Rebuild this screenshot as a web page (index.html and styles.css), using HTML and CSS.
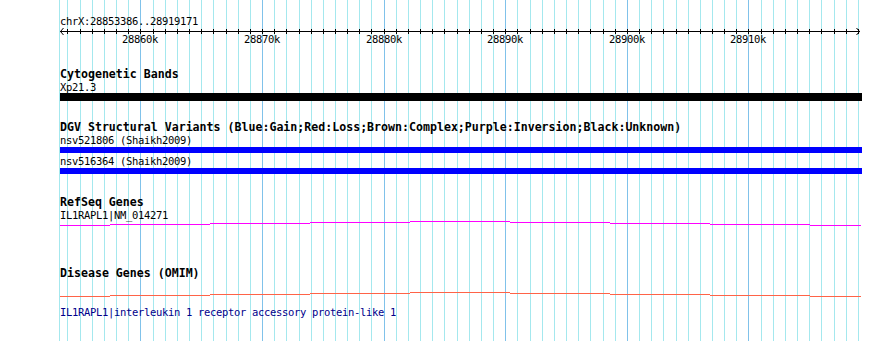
FILE: index.html
```html
<!DOCTYPE html>
<html lang="en">
<head>
  <meta charset="UTF-8" />
  <title>chrX:28853386..28919171</title>
  <link rel="stylesheet" href="styles.css">
</head>
<body>
  <div class="panel">

    <!-- grid lines, 1 per kb, drawn behind the tracks -->
    <svg class="grid" width="890" height="341" viewBox="0 0 890 341">
      <path class="minor" d="M59.5 0V341M67.5 0V341M80.5 0V341M92.5 0V341M104.5 0V341M116.5 0V341M128.5 0V341M153.5 0V341M165.5 0V341M177.5 0V341M189.5 0V341M201.5 0V341M213.5 0V341M226.5 0V341M238.5 0V341M250.5 0V341M274.5 0V341M286.5 0V341M299.5 0V341M311.5 0V341M323.5 0V341M335.5 0V341M347.5 0V341M359.5 0V341M371.5 0V341M396.5 0V341M408.5 0V341M420.5 0V341M432.5 0V341M444.5 0V341M457.5 0V341M469.5 0V341M481.5 0V341M493.5 0V341M517.5 0V341M530.5 0V341M542.5 0V341M554.5 0V341M566.5 0V341M578.5 0V341M590.5 0V341M603.5 0V341M615.5 0V341M639.5 0V341M651.5 0V341M663.5 0V341M676.5 0V341M688.5 0V341M700.5 0V341M712.5 0V341M724.5 0V341M736.5 0V341M761.5 0V341M773.5 0V341M785.5 0V341M797.5 0V341M809.5 0V341M821.5 0V341M834.5 0V341M846.5 0V341M858.5 0V341"/>
      <path class="major" d="M140.5 0V341M262.5 0V341M384.5 0V341M505.5 0V341M627.5 0V341M748.5 0V341"/>
    </svg>

    <!-- ruler -->
    <div class="track ruler">
      <div class="label">chrX:28853386..28919171</div>
      <svg class="axis" width="890" height="18" viewBox="0 28 890 18">
        <path class="axis-line" d="M60 31.5H860"/>
        <path class="ticks" d="M67.5 29V34M80.5 29V34M92.5 29V34M104.5 29V34M116.5 29V34M128.5 29V34M140.5 29V34M153.5 29V34M165.5 29V34M177.5 29V34M189.5 29V34M201.5 29V34M213.5 29V34M226.5 29V34M238.5 29V34M250.5 29V34M262.5 29V34M274.5 29V34M286.5 29V34M299.5 29V34M311.5 29V34M323.5 29V34M335.5 29V34M347.5 29V34M359.5 29V34M371.5 29V34M384.5 29V34M396.5 29V34M408.5 29V34M420.5 29V34M432.5 29V34M444.5 29V34M457.5 29V34M469.5 29V34M481.5 29V34M493.5 29V34M505.5 29V34M517.5 29V34M530.5 29V34M542.5 29V34M554.5 29V34M566.5 29V34M578.5 29V34M590.5 29V34M603.5 29V34M615.5 29V34M627.5 29V34M639.5 29V34M651.5 29V34M663.5 29V34M676.5 29V34M688.5 29V34M700.5 29V34M712.5 29V34M724.5 29V34M736.5 29V34M748.5 29V34M761.5 29V34M773.5 29V34M785.5 29V34M797.5 29V34M809.5 29V34M821.5 29V34M834.5 29V34M846.5 29V34M858.5 29V34"/>
        <path class="arrow" d="M63.5 28L60.5 31.5L63.5 35"/>
        <path class="arrow" d="M856.5 28L859.5 31.5L856.5 35"/>
        <text x="140" y="43">28860k</text>
        <text x="262" y="43">28870k</text>
        <text x="384" y="43">28880k</text>
        <text x="505" y="43">28890k</text>
        <text x="627" y="43">28900k</text>
        <text x="748" y="43">28910k</text>
      </svg>
    </div>

    <!-- Cytogenetic Bands -->
    <div class="track cyto">
      <div class="title">Cytogenetic Bands</div>
      <div class="label">Xp21.3</div>
      <div class="bar band"></div>
    </div>

    <!-- DGV -->
    <div class="track dgv">
      <div class="title">DGV Structural Variants (Blue:Gain;Red:Loss;Brown:Complex;Purple:Inversion;Black:Unknown)</div>
      <div class="label">nsv521806 (Shaikh2009)</div>
      <div class="bar gain"></div>
      <div class="label next">nsv516364 (Shaikh2009)</div>
      <div class="bar gain"></div>
    </div>

    <!-- RefSeq -->
    <div class="track refseq">
      <div class="title">RefSeq Genes</div>
      <div class="label">IL1RAPL1|NM_014271</div>
      <svg class="gene" width="890" height="7" viewBox="0 220 890 7">
        <path class="refseq-line" d="M60 225.5H110M110 224.5H210M210 223.5H310M310 222.5H410M410 221.5H510M510 222.5H610M610 223.5H710M710 224.5H810M810 225.5H861"/>
      </svg>
    </div>

    <!-- OMIM -->
    <div class="track omim">
      <div class="title">Disease Genes (OMIM)</div>
      <svg class="gene" width="890" height="8" viewBox="0 290 890 8">
        <path class="omim-line" d="M60 296.5H110M110 295.5H210M210 294.5H310M310 293.5H410M410 292.5H510M510 293.5H610M610 294.5H710M710 295.5H810M810 296.5H861"/>
      </svg>
      <div class="label desc">IL1RAPL1|interleukin 1 receptor accessory protein-like 1</div>
    </div>

  </div>
</body>
</html>
```

FILE: styles.css
```css
body {
  margin: 0;
  background: #ffffff;
  font-family: "DejaVu Sans Mono", "Liberation Mono", monospace;
  font-size: 10.5px;
  letter-spacing: -0.32px;
  color: #000;
}

.panel {
  position: relative;
  width: 890px;
  height: 341px;
  overflow: hidden;
}

/* grid */
.grid {
  position: absolute;
  left: 0;
  top: 0;
  shape-rendering: crispEdges;
}
.grid .minor {
  stroke: #a4e8ee;
  stroke-width: 1;
}
.grid .major {
  stroke: #80c2ea;
  stroke-width: 1;
}

.track {
  position: relative;
}

.track svg {
  display: block;
}

.title {
  padding-left: 60px;
  font-weight: bold;
  font-size: 11.6px;
  letter-spacing: 0;
  line-height: 13px;
  white-space: nowrap;
}

.label {
  padding-left: 60px;
  line-height: 12px;
  white-space: nowrap;
}

.bar {
  margin-left: 60px;
  width: 802px;
}
.band {
  height: 8px;
  background: #000;
}
.gain {
  height: 6px;
  margin-top: 1px;
  background: #0000ff;
}

/* ruler */
.ruler {
  padding-top: 15px;
}
.ruler .label {
  line-height: 13px;
}
.axis-line,
.ticks {
  stroke: #000;
  stroke-width: 1;
  shape-rendering: crispEdges;
  fill: none;
}
.arrow {
  stroke: #000;
  stroke-width: 1;
  fill: none;
}
.axis text {
  font-family: "DejaVu Sans Mono", "Liberation Mono", monospace;
  font-size: 10.5px;
  letter-spacing: -0.32px;
  text-anchor: middle;
  fill: #000;
}

/* tracks */
.cyto {
  margin-top: 22px;
}
.dgv {
  margin-top: 20px;
}
.dgv .next {
  margin-top: 2px;
}
.refseq {
  margin-top: 22px;
}
.refseq .gene {
  margin-top: -1px;
}
.omim {
  margin-top: 40px;
}
.omim .gene {
  margin-top: 10px;
}

.refseq-line,
.omim-line {
  fill: none;
  stroke-width: 1;
  shape-rendering: crispEdges;
}
.refseq-line {
  stroke: #ff00ff;
}
.omim-line {
  stroke: #ff6347;
}

.desc {
  margin-top: 8px;
  color: #00008b;
}
```
